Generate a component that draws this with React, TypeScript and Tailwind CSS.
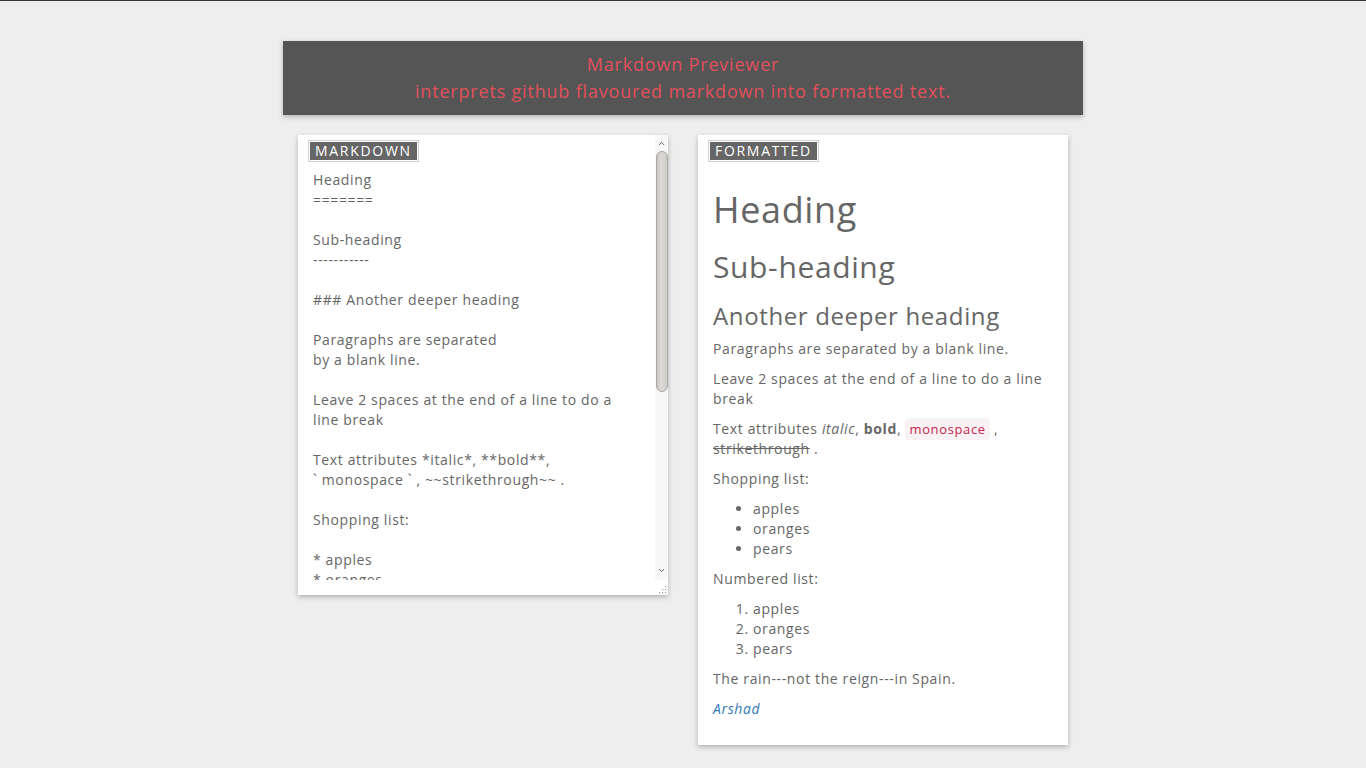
import React, { useState } from 'react';
import { ChevronUp, ChevronDown } from 'lucide-react';

const initialMarkdown = `Heading
=======

Sub-heading
-----------

### Another deeper heading

Paragraphs are separated
by a blank line.

Leave 2 spaces at the end of a line to do a
line break

Text attributes *italic*, **bold**,
\` monospace \` , ~~strikethrough~~ .

Shopping list:

* apples
* oranges
* pears

Numbered list:

1. apples
2. oranges
3. pears

The rain---not the reign---in Spain.

*[Arshad](https://github.com)*`;

const Label: React.FC<{ text: string }> = ({ text }) => (
  <span className="absolute left-[10px] top-[5px] z-10 border border-[#d0d0d0] bg-white p-px">
    <span className="block bg-[#666666] px-[5px] text-[14px] leading-[18px] font-medium tracking-[1.7px] text-white">
      {text}
    </span>
  </span>
);

// fake scrollbar, headless chrome hides the native one
const ScrollBar: React.FC = () => (
  <div className="pointer-events-none absolute right-0 top-0 flex h-[445px] w-[13px] flex-col items-center bg-[#f7f7f7]">
    <ChevronUp size={9} strokeWidth={2.5} className="mt-[4px] text-[#555555]" />
    <div className="mt-[3px] h-[241px] w-[12px] rounded-[6px] border border-[#a9a7a3] bg-[linear-gradient(90deg,#c9c7c3,#dcdad7_40%,#cfcdca)]" />
    <div className="flex-1" />
    <ChevronDown size={9} strokeWidth={2.5} className="mb-[5px] text-[#555555]" />
  </div>
);

const ResizeGrip: React.FC = () => (
  <svg width="9" height="9" viewBox="0 0 9 9" className="absolute bottom-[1px] right-[1px]">
    {[[7, 1], [7, 4], [4, 4], [7, 7], [4, 7], [1, 7]].map(([x, y]) => (
      <rect key={`${x}-${y}`} x={x} y={y} width="1" height="1" fill="#9a9a9a" />
    ))}
    {[[8, 2], [8, 5], [5, 5], [8, 8], [5, 8], [2, 8]].map(([x, y]) => (
      <rect key={`s${x}-${y}`} x={x} y={y} width="1" height="1" fill="#d6d6d6" />
    ))}
  </svg>
);

const Preview: React.FC = () => (
  <div className="text-[14px] leading-[20px] font-medium tracking-[0.045em] text-[#666666]">
    <h1 className="mt-[20px] mb-[10px] text-[36px] leading-[1.1] font-medium">Heading</h1>
    <h2 className="mt-[20px] mb-[10px] text-[30px] leading-[1.1] font-medium">Sub-heading</h2>
    <h3 className="mt-[20px] mb-[10px] text-[24px] leading-[1.1] font-medium">Another deeper heading</h3>
    <p className="mb-[10px]">Paragraphs are separated by a blank line.</p>
    <p className="mb-[10px]">Leave 2 spaces at the end of a line to do a line break</p>
    <p className="mb-[10px]">
      Text attributes <em>italic</em>, <strong>bold</strong>,{' '}
      <code className="rounded-[4px] bg-[#f9f2f4] px-[4px] py-[2px] font-['Open_Sans',sans-serif] text-[13px] text-[#c7254e]">monospace</code> ,{' '}
      <del>strikethrough</del> .
    </p>
    <p className="mb-[10px]">Shopping list:</p>
    <ul className="mb-[10px] list-disc pl-[40px]">
      <li>apples</li>
      <li>oranges</li>
      <li>pears</li>
    </ul>
    <p className="mb-[10px]">Numbered list:</p>
    <ol className="mb-[10px] list-decimal pl-[40px]">
      <li>apples</li>
      <li>oranges</li>
      <li>pears</li>
    </ol>
    <p className="mb-[10px]">The rain---not the reign---in Spain.</p>
    <p className="mb-[10px]">
      <em>
        <a href="#" className="text-[#337ab7]">Arshad</a>
      </em>
    </p>
  </div>
);

export default function App() {
  const [markdown, setMarkdown] = useState(initialMarkdown);

  return (
    <div className="min-h-screen border-t border-[#333333] bg-[#eeeeee] pt-[40px] font-['Open_Sans',sans-serif]">
      <div className="mx-auto w-[800px]">
        <header className="bg-[#555555] py-[10px] text-center text-[18px] leading-[27px] font-medium tracking-[0.045em] text-[#e0505e] shadow-[0_2px_5px_rgba(0,0,0,0.26)]">
          <div>Markdown Previewer</div>
          <div>interprets github flavoured markdown into formatted text.</div>
        </header>
        <div className="mt-[20px] flex items-start justify-between px-[15px]">
          <div className="relative h-[460px] w-[370px] bg-white shadow-[0_2px_5px_rgba(0,0,0,0.26)]">
            <Label text="MARKDOWN" />
            <textarea
              value={markdown}
              onChange={(e) => setMarkdown(e.target.value)}
              className="block h-[445px] w-[370px] resize-none overflow-hidden bg-white pt-[35px] pr-[28px] pl-[15px] font-['Open_Sans',sans-serif] text-[14px] leading-[20px] font-medium tracking-[0.045em] text-[#666666] outline-none"
            />
            <ScrollBar />
            <ResizeGrip />
          </div>
          <div className="relative w-[370px] bg-white pt-[35px] pr-[15px] pb-[16px] pl-[15px] shadow-[0_2px_5px_rgba(0,0,0,0.26)]">
            <Label text="FORMATTED" />
            <Preview />
          </div>
        </div>
      </div>
    </div>
  );
}
